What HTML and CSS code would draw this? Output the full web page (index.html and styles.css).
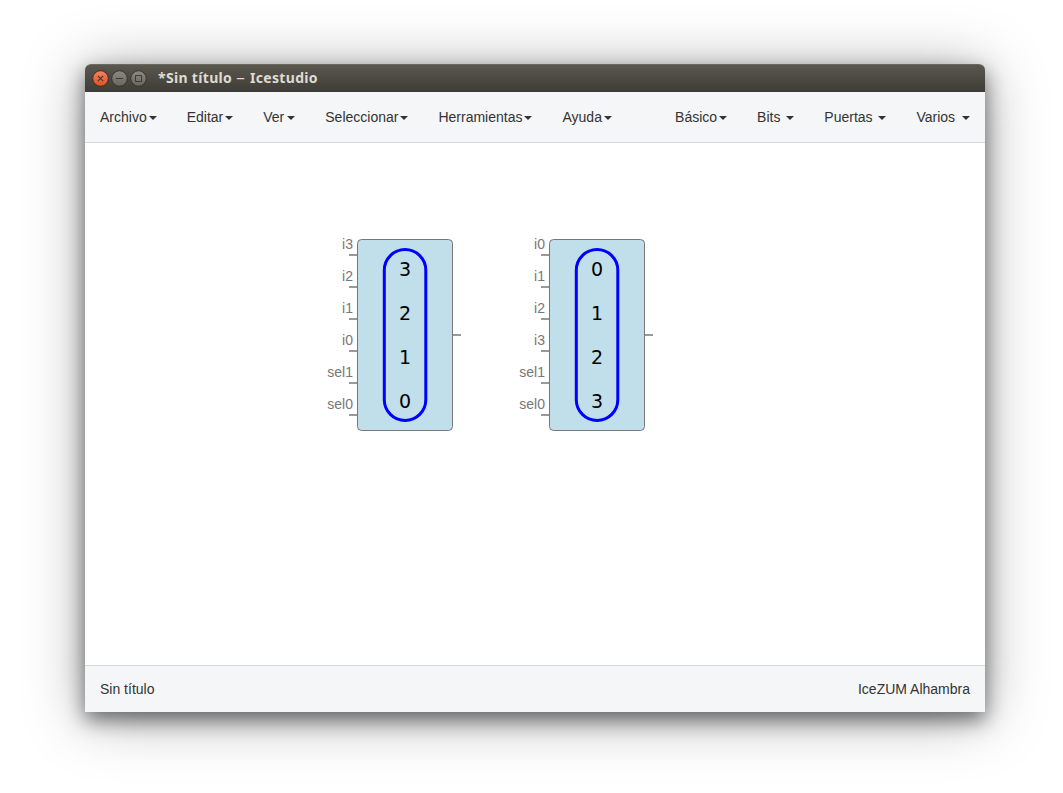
FILE: index.html
```html
<!DOCTYPE html>
<html lang="es">
<head>
<meta charset="utf-8">
<title>Sin título – Icestudio</title>
<link rel="stylesheet" href="styles.css">
</head>
<body>
<div class="window">
  <header class="titlebar">
    <svg class="controls" width="56" height="18" viewBox="0 0 56 18">
      <defs>
        <linearGradient id="close" x1="0" y1="0" x2="0" y2="1"><stop offset="0" stop-color="#f68361"/><stop offset="1" stop-color="#e2501e"/></linearGradient>
        <linearGradient id="grey" x1="0" y1="0" x2="0" y2="1"><stop offset="0" stop-color="#8d8a83"/><stop offset="1" stop-color="#66645d"/></linearGradient>
      </defs>
      <g stroke="#35332e" stroke-width="1">
        <circle cx="8.5" cy="9.5" r="7.8" fill="url(#close)"/>
        <circle cx="27.5" cy="9.5" r="7.8" fill="url(#grey)"/>
        <circle cx="46.5" cy="9.5" r="7.8" fill="url(#grey)"/>
      </g>
      <g fill="none" stroke="#3c3b37" stroke-width="1.2">
        <path d="M5.8 6.8l5.4 5.4M11.2 6.8l-5.4 5.4"/>
        <path d="M24 9.5h7" stroke-width="1"/>
        <path d="M43.5 6.5h6v6h-6z" stroke-width="1"/>
      </g>
    </svg>
    <span class="title">*Sin título <span class="dash">–</span> Icestudio</span>
  </header>
  <nav class="navbar">
    <ul class="menu">
      <li>Archivo<b class="caret"></b></li>
      <li>Editar<b class="caret"></b></li>
      <li class="wide">Ver<b class="caret"></b></li>
      <li>Seleccionar<b class="caret"></b></li>
      <li>Herramientas<b class="caret"></b></li>
      <li>Ayuda<b class="caret"></b></li>
    </ul>
    <ul class="menu">
      <li>Básico<b class="caret"></b></li>
      <li>Bits <b class="caret"></b></li>
      <li>Puertas <b class="caret"></b></li>
      <li class="wide">Varios <b class="caret"></b></li>
    </ul>
  </nav>
  <main class="canvas">
    <svg class="block block-left" width="140" height="200" viewBox="0 0 140 200">
      <path class="wire" d="M29 20h8M29 52h8M29 84h8M29 116h8M29 148h8M29 180h8M132 100h9"/>
      <rect class="body" x="37.5" y="4.5" width="95" height="191" rx="4"/>
      <rect class="pill" x="64.3" y="14.5" width="41.5" height="171" rx="20.75"/>
      <g class="port"><text x="33" y="14">i3</text><text x="33" y="46">i2</text><text x="33" y="78">i1</text><text x="33" y="110">i0</text><text x="33" y="142">sel1</text><text x="33" y="174">sel0</text></g>
      <g class="digit"><text x="85" y="41">3</text><text x="85" y="85">2</text><text x="85" y="129">1</text><text x="85" y="173">0</text></g>
    </svg>
    <svg class="block block-right" width="140" height="200" viewBox="0 0 140 200">
      <path class="wire" d="M29 20h8M29 52h8M29 84h8M29 116h8M29 148h8M29 180h8M132 100h9"/>
      <rect class="body" x="37.5" y="4.5" width="95" height="191" rx="4"/>
      <rect class="pill" x="64.3" y="14.5" width="41.5" height="171" rx="20.75"/>
      <g class="port"><text x="33" y="14">i0</text><text x="33" y="46">i1</text><text x="33" y="78">i2</text><text x="33" y="110">i3</text><text x="33" y="142">sel1</text><text x="33" y="174">sel0</text></g>
      <g class="digit"><text x="85" y="41">0</text><text x="85" y="85">1</text><text x="85" y="129">2</text><text x="85" y="173">3</text></g>
    </svg>
  </main>
  <footer class="statusbar">
    <span>Sin título</span>
    <span>IceZUM Alhambra</span>
  </footer>
</div>
</body>
</html>
```
FILE: styles.css
```css
* { box-sizing: border-box; }

body {
  margin: 0;
  height: 793px;
  overflow: hidden;
  padding: 64px 78px 0 85px;
  background: #fff;
  color: #333;
  font: 14px/20px "Liberation Sans", Arial, sans-serif;
}

.window {
  display: flex;
  flex-direction: column;
  width: 900px;
  height: 648px;
  border-radius: 6px 6px 0 0;
  background: #fff;
  box-shadow: 0 8px 20px rgba(0, 0, 0, .5), 0 5px 60px rgba(0, 0, 0, .34);
}

.titlebar {
  display: flex;
  align-items: center;
  gap: 10px;
  height: 28px;
  padding-left: 7px;
  border-radius: 6px 6px 0 0;
  border-top: 1px solid #6b6860;
  background: linear-gradient(#5a574e, #3e3c37);
}

.controls { margin-top: -1px; }

.title {
  margin-top: -2px;
  color: #dfdbd2;
  font: bold 14px/20px "Noto Sans", sans-serif;
  letter-spacing: .32px;
  white-space: nowrap;
}

.dash {
  display: inline-block;
  width: 10px;
  font-family: "DejaVu Sans", sans-serif;
  font-size: 18px;
  font-weight: normal;
  line-height: 1;
}

.navbar {
  display: flex;
  justify-content: space-between;
  height: 51px;
  border-bottom: 1px solid #d3d7db;
  background: #f5f6f8;
}

.menu {
  display: flex;
  margin: 0;
  padding: 0;
  list-style: none;
}

.menu li {
  padding: 15px;
  white-space: pre;
}

.caret {
  display: inline-block;
  margin-left: 2px;
  vertical-align: middle;
  border-top: 4px solid #333;
  border-left: 4px solid transparent;
  border-right: 4px solid transparent;
}

.wide .caret { margin-left: 3px; }

.canvas {
  position: relative;
  flex: 1;
}

.block {
  position: absolute;
  top: 92px;
  overflow: visible;
}

.block-left { left: 235px; }
.block-right { left: 427px; }

.wire { stroke: #999; stroke-width: 2; }
.body { fill: #c0dfeb; stroke: #777; }
.pill { fill: none; stroke: #00f; stroke-width: 3; }
.port { fill: #777; text-anchor: end; }

.digit {
  fill: #000;
  font: 19px "DejaVu Sans", sans-serif;
  text-anchor: middle;
}

.statusbar {
  display: flex;
  justify-content: space-between;
  height: 47px;
  padding: 13px 15px;
  border-top: 1px solid #d3d7db;
  background: #f5f6f8;
}
```
